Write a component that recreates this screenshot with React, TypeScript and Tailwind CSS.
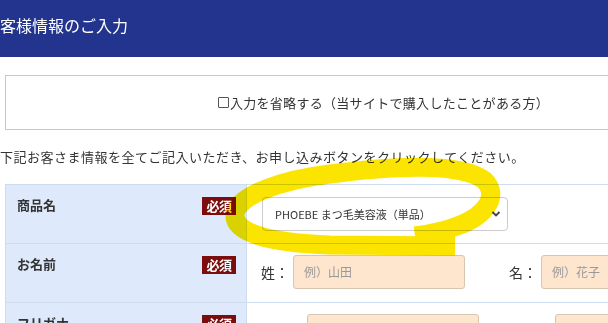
const font = { fontFamily: '"Noto Sans CJK JP", "Noto Sans", sans-serif' };

const Badge = () => (
    <span className="inline-block w-[34px] h-[18px] bg-[#7b0d0d] text-white text-[13px] font-bold leading-[18px] text-center tracking-[-0.5px] mt-[2px]">必須</span>
);

const Label = ({ text }: { text: string }) => (
    <div className="w-[241px] shrink-0 bg-[#deeafb] border-r border-[#cddcee] pl-[11px] pr-[10px] pt-[10px] flex justify-between items-start">
        <span className="text-[13px] font-bold leading-[20px] text-[#333]">{ text }</span>
        <Badge />
    </div>
);

const NameInput = ({ label, placeholder }: { label: string; placeholder: string }) => (
    <div className="w-[248px] shrink-0 flex items-center">
        <span className="text-[14px] text-[#333] mr-[4px] whitespace-nowrap">{ label }</span>
        <div className="w-[172px] h-[34px] shrink-0 bg-[#fde5ce] border border-[#d8c6b2] rounded-[3px] pl-[10px] flex items-center text-[12px] text-[#999]">
            { placeholder }
        </div>
    </div>
);

const App = () => {
    return (
        <div className="relative w-screen h-screen overflow-hidden bg-white text-[#333]" style={ font }>
            <div className="h-[57px] bg-[#22348e] pt-[14px]">
                <div className="text-white text-[16px] leading-[22px] whitespace-nowrap">客様情報のご入力</div>
            </div>

            <div className="ml-[5px] mt-[18px] w-[757px] h-[55px] border border-[#c8c8c8] flex items-center justify-center text-[13px] tracking-[0.3px] whitespace-nowrap">
                <span className="inline-block w-[11px] h-[11px] border border-[#555] rounded-[1px] mr-[1px]"></span>
                入力を省略する（当サイトで購入したことがある方）
            </div>

            <p className="mt-[17px] text-[13px] leading-[20px] tracking-[0.5px] whitespace-nowrap">
                下記お客さま情報を全てご記入いただき、お申し込みボタンをクリックしてください。
            </p>

            <div className="ml-[5px] mt-[17px] w-[757px] border-t border-l border-[#cddcee]">
                <div className="h-[59px] flex border-b border-[#cddcee]">
                    <Label text="商品名" />
                    <div className="pl-[15px] pt-[12px]">
                        <div className="w-[246px] h-[34px] border border-[#ccc] rounded-[4px] bg-white pl-[12px] pr-[6px] flex items-center justify-between text-[11px] text-[#333]">
                            <span>PHOEBE まつ毛美容液（単品）</span>
                            <svg width="10" height="8" viewBox="0 0 10 8">
                                <path d="M1.5 2 L5 5.5 L8.5 2" fill="none" stroke="#444" strokeWidth="1.8" />
                            </svg>
                        </div>
                    </div>
                </div>
                <div className="h-[59px] flex border-b border-[#cddcee]">
                    <Label text="お名前" />
                    <div className="pl-[14px] pt-[11px] flex items-start">
                        <NameInput label="姓：" placeholder="例）山田" />
                        <NameInput label="名：" placeholder="例）花子" />
                    </div>
                </div>
                <div className="h-[59px] flex border-b border-[#cddcee]">
                    <Label text="フリガナ" />
                    <div className="pl-[14px] pt-[11px] flex items-start">
                        <NameInput label="セイ：" placeholder="例）ヤマダ" />
                        <NameInput label="メイ：" placeholder="例）ハナコ" />
                    </div>
                </div>
            </div>

            <svg className="absolute top-0 left-0 pointer-events-none mix-blend-multiply" width="608" height="323" viewBox="0 0 608 323">
                <path
                    d="M 455 246 L 330 245 C 270 243 233 233 235 214 C 237 196 280 180 330 174 C 390 166 460 162 484 180 C 500 195 486 215 460 225 C 445 231 430 234 415 236"
                    fill="none"
                    stroke="#fbe400"
                    strokeWidth="19"
                    strokeLinejoin="round"
                />
            </svg>
        </div>
    );
};

export default App;
